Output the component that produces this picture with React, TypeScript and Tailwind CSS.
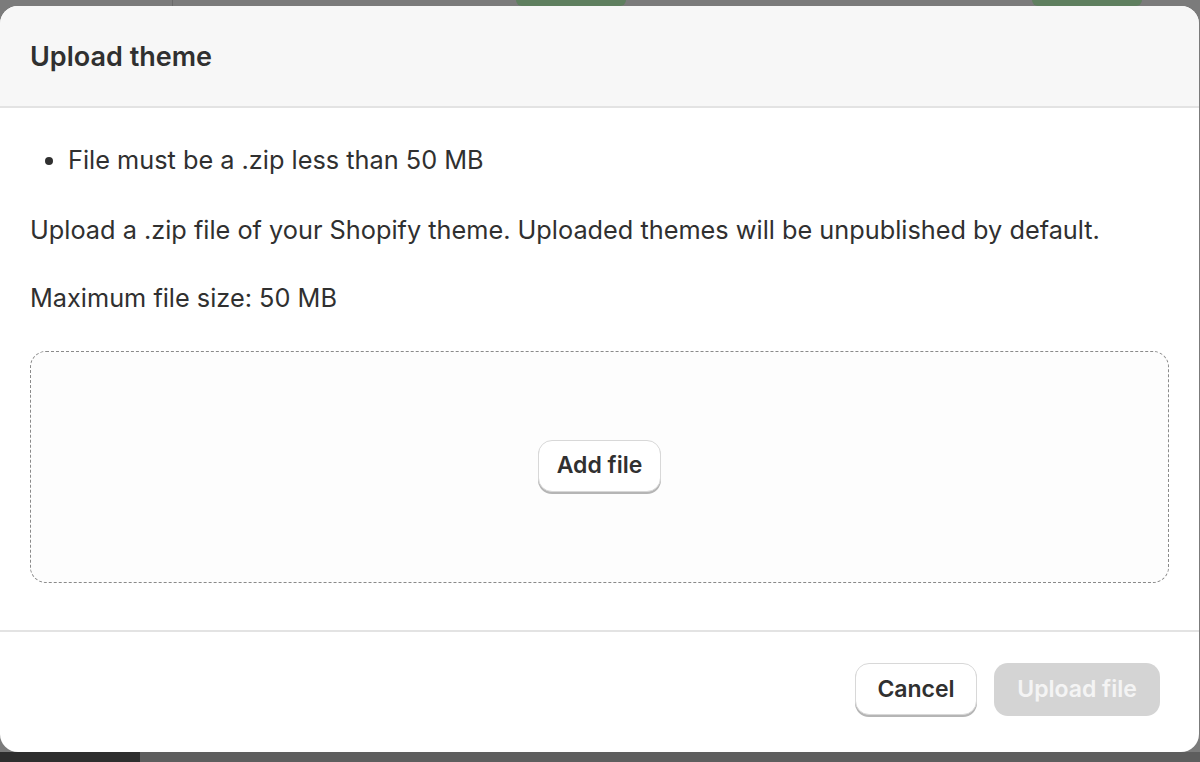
import React from "react";

export default function App() {
  return (
    <div
      className="relative h-[762px] w-[1200px] overflow-hidden bg-[#7b7b7b]"
      style={{ fontFamily: "Inter, 'Noto Sans', sans-serif" }}
    >
      {/* background hints */}
      <div className="absolute left-[172px] top-0 h-[6px] w-[1px] bg-[#6a6a6a]" />
      <div className="absolute left-[516px] top-0 h-[6px] w-[110px] rounded-b-full bg-[#5f7f5f]" />
      <div className="absolute left-[1032px] top-0 h-[6px] w-[110px] rounded-b-full bg-[#5f7f5f]" />
      <div className="absolute left-0 bottom-0 h-[10px] w-[1200px] bg-[#5e5e5e]" />
      <div className="absolute left-0 bottom-0 h-[10px] w-[140px] bg-[#2e2e2e]" />

      <div className="absolute left-0 top-[6px] flex h-[746px] w-[1199px] flex-col overflow-hidden rounded-[18px] bg-white">
        <div className="flex h-[102px] shrink-0 items-center border-b-2 border-[#e3e3e3] bg-[#f7f7f7] px-[30px] pt-[2px]">
          <h1 className="text-[27px] font-semibold text-[#303030]">Upload theme</h1>
        </div>
        <div className="flex flex-col px-[30px] pt-[36px] text-[25.3px] text-[#303030]">
          <ul className="list-disc pl-[38px] leading-[32px]">
            <li>File must be a .zip less than 50 MB</li>
          </ul>
          <p className="mt-[38px] leading-[32px]">
            Upload a .zip file of your Shopify theme. Uploaded themes will be unpublished by default.
          </p>
          <p className="mt-[36px] leading-[32px]">Maximum file size: 50 MB</p>
          <div className="mt-[37px] flex h-[232px] items-center justify-center rounded-[16px] border border-dashed border-[#8a8a8a] bg-[#fdfdfd]">
            <button className="mt-[-3px] h-[52px] rounded-[14px] border border-[#d8d8d8] bg-white px-[18px] text-[23px] font-semibold text-[#303030] shadow-[0_2px_0_#b5b5b5]">
              Add file
            </button>
          </div>
        </div>
        <div className="mt-[47px] border-t-2 border-[#e3e3e3]" />
        <div className="flex flex-1 items-center justify-end gap-[17px] px-[39px] pb-[6px]">
          <button className="h-[52px] w-[122px] rounded-[14px] border border-[#d8d8d8] bg-white text-[23px] font-semibold text-[#303030] shadow-[0_2px_0_#b5b5b5]">
            Cancel
          </button>
          <button className="h-[53px] w-[166px] rounded-[14px] bg-[#d4d4d4] text-[23px] font-semibold text-[#f4f4f4]">
            Upload file
          </button>
        </div>
      </div>
    </div>
  );
}
